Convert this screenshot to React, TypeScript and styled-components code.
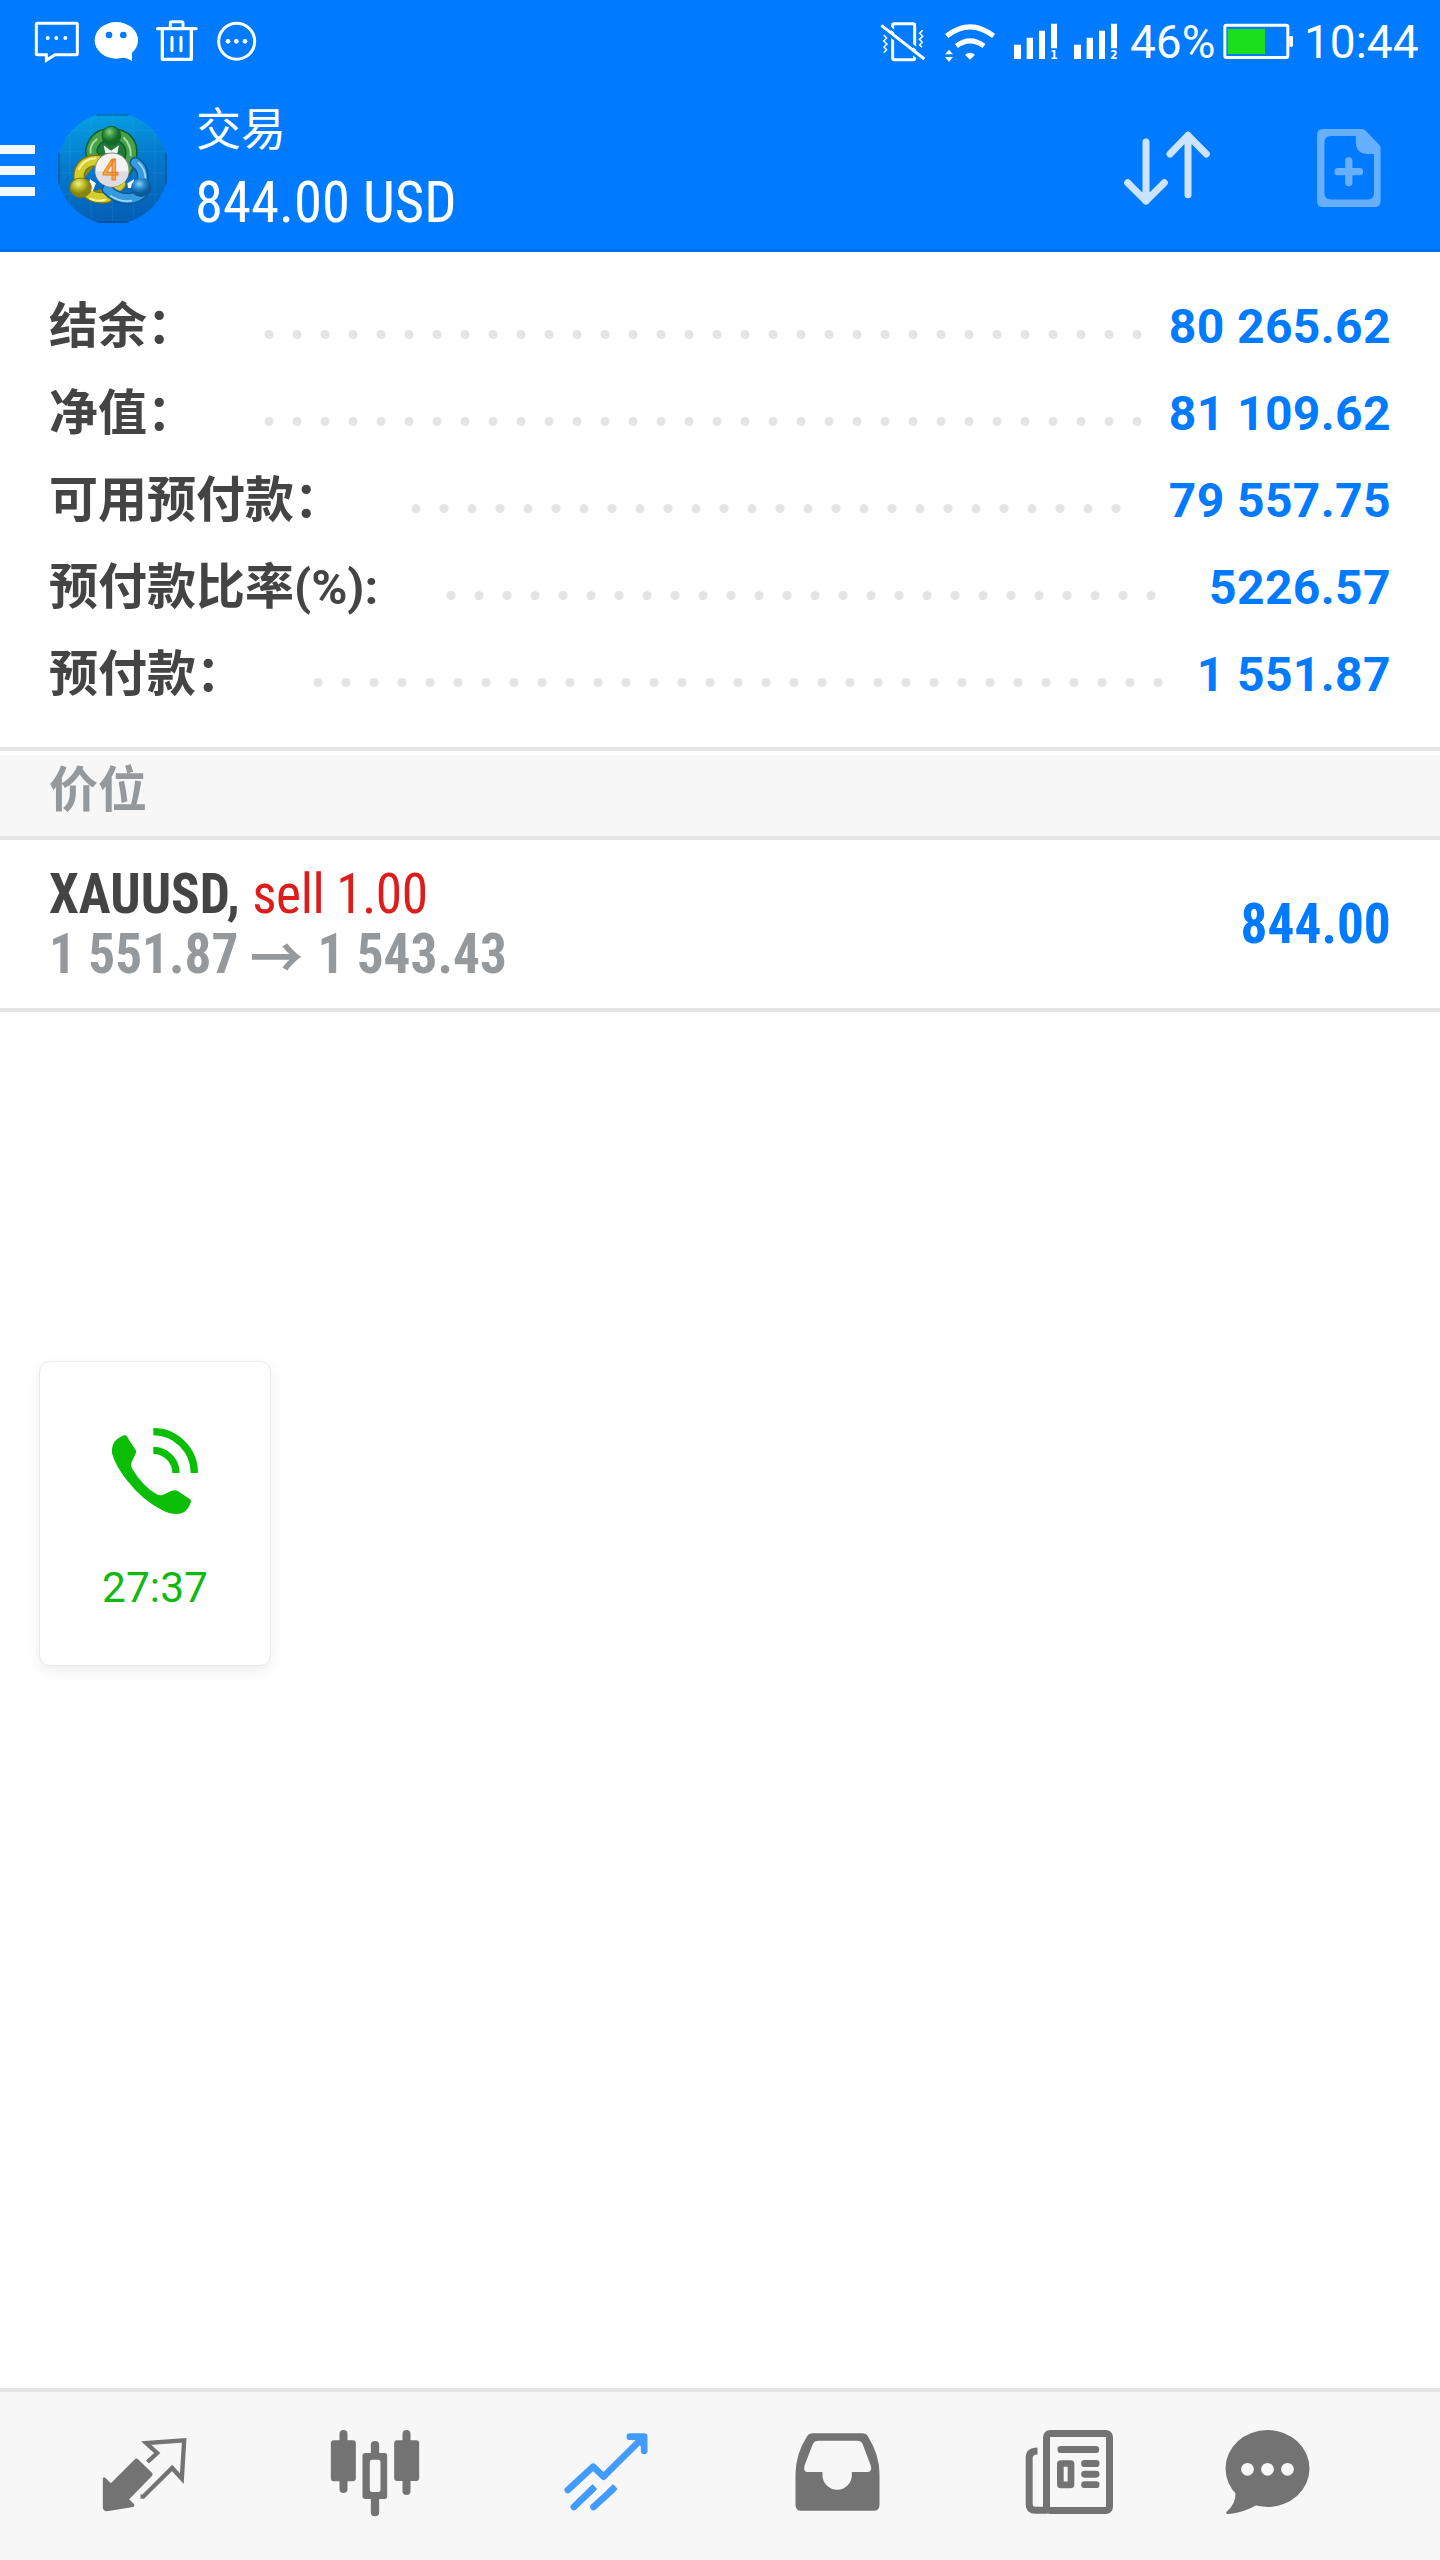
import React from "react";
import styled, { createGlobalStyle } from "styled-components";

const blue = "#007aff";
const line = "#e4e4e4";
const panel = "#f7f7f7";
const iconGray = "#737373";
const sans = `Roboto, "Noto Sans CJK SC", sans-serif`;
const condensed = `"Roboto Condensed", Roboto, "Noto Sans CJK SC", sans-serif`;

const GlobalStyle = createGlobalStyle`
  * { box-sizing: border-box; }
  body { margin: 0; background: #fff; font-family: ${sans}; }
  svg { display: block; flex: none; }
`;

const Screen = styled.div`
  position: relative;
  display: flex;
  flex-direction: column;
  width: 1440px;
  height: 2560px;
  overflow: hidden;
  background: #fff;
`;

const StatusBar = styled.header`
  display: flex;
  justify-content: space-between;
  height: 84px;
  padding: 18px 0 18px 32px;
  background: ${blue};
  color: #fff;
`;

const StatusGroup = styled.div`
  display: flex;
`;

const StatusText = styled.span<{ $width: number; $indent: number }>`
  width: ${(p) => p.$width}px;
  padding-left: ${(p) => p.$indent}px;
  font-size: 46px;
  line-height: 48px;
  white-space: nowrap;
`;

const AppBar = styled.div`
  display: flex;
  align-items: center;
  height: 168px;
  padding-right: 59px;
  background: ${blue};
  box-shadow: inset 0 -3px 0 #006fe8;
`;

const Logo = styled.svg`
  margin-left: 23px;
`;

const Heading = styled.div`
  display: flex;
  flex-direction: column;
  gap: 12px;
  align-self: flex-start;
  margin: 16px 0 0 28px;
  color: #fff;
`;

const Title = styled.h1`
  margin: 0;
  padding-left: 1px;
  font: 400 45px/54px "Noto Sans CJK SC", sans-serif;
`;

const Balance = styled.div`
  font: 400 58px/72px ${condensed};
  transform: scaleX(0.978);
  transform-origin: left;
`;

const Actions = styled.div`
  display: flex;
  align-items: center;
  gap: 105px;
  margin-left: auto;
`;

const Summary = styled.section`
  padding: 31px 49px 29px;
`;

const SummaryRow = styled.div`
  display: flex;
  height: 87px;
  line-height: 87px;
  font-weight: 700;
`;

const Label = styled.span`
  font-size: 49px;
  color: #444;
  white-space: nowrap;
`;

const Leader = styled.span<{ $dots: number }>`
  width: ${(p) => p.$dots * 28}px;
  margin-left: 59px;
  background: radial-gradient(circle at 14px 51.5px, ${line} 4px, transparent 5px) 0 0 / 28px 87px repeat-x;
`;

const Amount = styled.span`
  margin-left: auto;
  font-size: 48px;
  letter-spacing: 0.4px;
  color: ${blue};
  white-space: nowrap;
`;

const SectionHead = styled.h2`
  height: 93px;
  margin: 0;
  padding: 4px 49px 0;
  border: solid ${line};
  border-width: 4px 0;
  background: linear-gradient(#fff 4px, ${panel} 4px);
  font: 700 49px/72px ${sans};
  color: #95999c;
`;

const Position = styled.div`
  display: flex;
  justify-content: space-between;
  align-items: center;
  height: 172px;
  padding: 0 49px;
  border-bottom: 4px solid ${line};
  font: 700 56px/60px ${condensed};
`;

const Order = styled.div`
  display: flex;
  flex-direction: column;
  transform: scaleX(0.952);
  transform-origin: left;
`;

const Instrument = styled.div`
  color: #444;
`;

const Side = styled.span`
  font-weight: 400;
  letter-spacing: -0.4px;
  color: #dd1c1c;
`;

const Prices = styled.div`
  display: flex;
  color: #95999c;
`;

const Arrow = styled.span`
  margin: 0 15px 0 12px;
  font-family: "Noto Sans CJK SC", sans-serif;
`;

const Profit = styled.div`
  color: ${blue};
  transform: scaleX(0.952);
  transform-origin: right;
`;

const CallCard = styled.aside`
  position: absolute;
  left: 39px;
  top: 1361px;
  display: flex;
  flex-direction: column;
  align-items: center;
  gap: 49px;
  width: 232px;
  height: 305px;
  padding-top: 66px;
  border: 1px solid #e9e9e9;
  border-radius: 11px;
  background: #fff;
  box-shadow: 0 5px 14px rgba(0, 0, 0, 0.07);
`;

const CallTime = styled.span`
  font-size: 42.5px;
  line-height: 50px;
  color: #12b812;
`;

const TabBar = styled.nav`
  display: grid;
  grid-template-columns: repeat(5, 231px) 167px;
  place-items: center;
  height: 172px;
  margin-top: auto;
  padding-left: 29px;
  border-top: 4px solid ${line};
  background: ${panel};
`;

const Tab = styled.button`
  padding: 0;
  border: 0;
  background: none;
  color: ${iconGray};
`;

const rows = [
  { label: "结余：", amount: "80 265.62", dots: 32 },
  { label: "净值：", amount: "81 109.62", dots: 32 },
  { label: "可用预付款：", amount: "79 557.75", dots: 26 },
  { label: "预付款比率(%):", amount: "5226.57", dots: 26 },
  { label: "预付款：", amount: "1 551.87", dots: 31 },
];

function LeftStatusIcons() {
  return (
    <StatusGroup>
      <svg width="56" height="48" viewBox="96 54 168 144" fill="none" stroke="#fff" strokeWidth="9">
        <path d="M112 70H229Q232 70 232 73V161Q232 164 229 164H165L139 181V164H112Q109 164 109 161V73Q109 70 112 70Z" />
        <g fill="#fff" stroke="none"><circle cx="143" cy="114" r="6" /><circle cx="169" cy="114" r="6" /><circle cx="196" cy="114" r="6" /></g>
      </svg>
      <svg width="60" height="48" viewBox="264 54 180 144" fill="#fff">
        <ellipse cx="349" cy="121" rx="65" ry="55" />
        <path d="M368 172Q384 175 396 183V150Z" />
        <circle cx="327" cy="105" r="10" fill={blue} /><circle cx="370" cy="105" r="10" fill={blue} />
      </svg>
      <svg width="60" height="48" viewBox="444 54 180 144" fill="none" stroke="#fff" strokeWidth="10">
        <path d="M473 86H588" strokeLinecap="round" />
        <path d="M511 84V70Q511 65 516 65H544Q549 65 549 70V84" strokeWidth="9" />
        <path d="M487 88V178H574V88" strokeLinejoin="round" />
        <path d="M516 112V152M543 112V152" strokeLinecap="round" strokeWidth="9" />
      </svg>
      <svg width="58" height="48" viewBox="624 54 174 144" fill="#fff">
        <circle cx="710" cy="124" r="54" fill="none" stroke="#fff" strokeWidth="9" />
        <circle cx="684" cy="124" r="7" /><circle cx="709" cy="124" r="7" /><circle cx="735" cy="124" r="7" />
      </svg>
    </StatusGroup>
  );
}

function Signal({ slot }: { slot: number }) {
  return (
    <svg width="60" height="48" viewBox="408 24 180 144" fill="#fff">
      <path d="M432 104H453V147H432ZM470 83H489V147H470ZM507 62H525V147H507ZM543 41H561V115H543Z" />
      <text x="552" y="147" fontFamily="DejaVu Sans" fontWeight="700" fontSize="37" textAnchor="middle" textLength="22" lengthAdjust="spacingAndGlyphs">{slot}</text>
    </svg>
  );
}

function RightStatusIcons() {
  return (
    <StatusGroup>
      <svg width="56" height="48" viewBox="24 24 168 144" fill="none" stroke="#fff">
        <rect x="68" y="41" width="66" height="108" rx="4" strokeWidth="9" />
        <path d="M38 59L158 153" stroke={blue} strokeWidth="9" />
        <path d="M46 42L166 136" stroke={blue} strokeWidth="7" />
        <path d="M34 46L163 147" strokeWidth="9" />
        <path d="M41 75L50 84L41 93L51 102L42 111L50 119L41 128M158 61L149 70L158 79L148 88L157 97L149 105L156 112" strokeWidth="4.5" />
      </svg>
      <svg width="72" height="48" viewBox="192 24 216 144" fill="#fff">
        <g fill="none" stroke="#fff" strokeWidth="15"><path d="M230 78Q300 23 371 78" /><path d="M259 108Q300 77 342 108" /></g>
        <path d="M285 134Q300 122 315 134L300 149ZM225 133L237 119L249 133ZM225 141H249L237 155Z" />
      </svg>
      <Signal slot={1} />
      <Signal slot={2} />
      <StatusText $width={92} $indent={4}>46%</StatusText>
      <svg width="80" height="48" viewBox="1044 24 240 144">
        <rect x="1064.500" y="45.500" width="189" height="97" rx="5" fill="none" stroke="#fff" strokeWidth="9" />
        <path d="M1258 78H1266Q1269 78 1269 81V107Q1269 110 1266 110H1258Z" fill="#fff" />
        <rect x="1073" y="57" width="112" height="75" fill="#1cdf1c" />
      </svg>
      <StatusText $width={142} $indent={6}>10:44</StatusText>
    </StatusGroup>
  );
}

function AppLogo() {
  return (
    <Logo width="109" height="109" viewBox="54 54 327 327">
      <defs>
        <linearGradient id="sky" x1="0" y1="0" x2="0.150" y2="1">
          <stop offset="0" stopColor="#06a5e6" /><stop offset="0.500" stopColor="#0579cc" /><stop offset="1" stopColor="#0460b6" />
        </linearGradient>
        <radialGradient id="green" cx="0.400" cy="0.300"><stop offset="0" stopColor="#8fd08a" /><stop offset="0.500" stopColor="#3c9a45" /><stop offset="1" stopColor="#14692a" /></radialGradient>
        <radialGradient id="yellow" cx="0.400" cy="0.300"><stop offset="0" stopColor="#f1ee8d" /><stop offset="0.500" stopColor="#c3c02c" /><stop offset="1" stopColor="#858510" /></radialGradient>
        <radialGradient id="azure" cx="0.400" cy="0.300"><stop offset="0" stopColor="#8fd0f4" /><stop offset="0.500" stopColor="#2a8ed0" /><stop offset="1" stopColor="#0b5a9c" /></radialGradient>
      </defs>
      <circle cx="217.500" cy="217.500" r="167" fill="url(#sky)" />
      <path d="M90 110V325M153 66V370M217 60V375M281 66V370M345 110V325M80 103H355M62 167H373M60 231H375M70 295H365" stroke="#3db4ee" strokeOpacity="0.250" strokeWidth="2" fill="none" />
      <path d="M170 57H265M57 170V265M378 170V265M170 378H265" stroke="#06458f" strokeOpacity="0.450" strokeWidth="6" />
      <g fill="none" strokeLinecap="round">
        <path d="M163 184Q148 172 159 147Q174 114 213 115Q260 116 272 152Q280 186 258 222" fill="#1f7a38" stroke="#0b5f2a" strokeWidth="38" />
        <path d="M163 184Q148 172 159 147Q174 114 213 115Q260 116 272 152Q280 186 258 222" stroke="#46a148" strokeWidth="29" />
        <path d="M152 170Q148 148 170 130M252 126Q274 148 272 178" stroke="#a5dda0" strokeWidth="6" />
        <path d="M176 194Q136 191 121 221Q113 239 121 260M142 290Q166 311 203 303L242 264" fill="#8f8b12" stroke="#7c7708" strokeWidth="35" />
        <path d="M176 194Q136 191 121 221Q113 239 121 260M142 290Q166 311 203 303L242 264" stroke="#d2cd2c" strokeWidth="27" />
        <path d="M166 187Q130 190 117 219M150 308Q172 319 196 311" stroke="#f5f3a0" strokeWidth="6" />
        <path d="M286 200Q306 212 308 238L308 262M202 280Q226 306 263 308Q290 307 306 292" fill="#1972b8" stroke="#0b559c" strokeWidth="35" />
        <path d="M286 200Q306 212 308 238L308 262M202 280Q226 306 263 308Q290 307 306 292" stroke="#359bdc" strokeWidth="26" />
        <path d="M295 200Q314 216 316 244M212 300Q244 320 274 314" stroke="#9ed9f8" strokeWidth="5" />
      </g>
      <path d="M191 148L213 164L237 148L232 172H196ZM150 250L168 262L158 286L142 282ZM282 250L262 262L264 276L284 276Z" fill="#f2f7f2" />
      <circle cx="214" cy="119" r="28" fill="url(#green)" stroke="#11642a" strokeWidth="3" />
      <ellipse cx="122" cy="275" rx="32" ry="29" fill="url(#yellow)" stroke="#7d7b10" strokeWidth="3" />
      <ellipse cx="304" cy="275" rx="31" ry="28" fill="url(#azure)" />
      <circle cx="216" cy="222" r="51" fill="#f3f3f6" stroke="#8b8b74" strokeWidth="3" />
      <path d="M166 226H266Q262 270 216 272Q170 270 166 226Z" fill="#dcdce2" />
      <text x="212" y="253" fontFamily="Roboto" fontSize="86" fontWeight="500" fill="#f9b04c" stroke="#ea7d16" strokeWidth="3" textAnchor="middle">4</text>
    </Logo>
  );
}

function Tabs() {
  return (
    <TabBar>
      <Tab>
        <svg width="100" height="100" viewBox="103.500 168 300 300" fill="currentColor">
          <path d="M224 267Q228 264 232 267L275 309Q278 313 275 317L206 388L221 403Q224 409 218 411L140 424Q127 424 127 412V325Q130 319 135 324L151 340Z" />
          <path d="M261 276L290 249L257 219L371 211L364 326L335 294L248 380H240" fill="none" stroke="currentColor" strokeWidth="13" />
        </svg>
      </Tab>
      <Tab>
        <svg width="100" height="100" viewBox="796.500 168 300 300" fill="currentColor">
          <rect x="837" y="180" width="24" height="189" rx="12" /><rect x="811" y="211" width="75" height="123" rx="9" />
          <rect x="931" y="213" width="25" height="226" rx="12" /><rect x="906" y="249" width="74" height="138" rx="8" />
          <rect x="928" y="269" width="32" height="97" rx="7" fill={panel} />
          <rect x="1026" y="180" width="24" height="195" rx="12" /><rect x="1001" y="211" width="75" height="122" rx="9" />
        </svg>
      </Tab>
      <Tab>
        <svg width="100" height="100" viewBox="109.500 168 300 300" fill="none" stroke="#429bff" strokeWidth="20" strokeLinecap="round" strokeLinejoin="round">
          <path d="M142 360L218 290L249 320L369 201M328 200H371V243M160 411L216 357M219 411L278 357" />
          <path d="M205 367L223 350M266 367L284 350" strokeLinecap="butt" />
          <path d="M350 203L368 203L368 222Z" />
        </svg>
      </Tab>
      <Tab>
        <svg width="100" height="100" viewBox="802.500 168 300 300" fill="currentColor">
          <path fillRule="evenodd" d="M878 190H1025Q1036 190 1043 200Q1077 255 1077 312V404Q1077 422 1060 422H842Q825 422 825 404V312Q826 250 859 200Q866 190 878 190ZM895 212Q881 212 877 222L852 287Q848 306 862 306H906V316A44 43 0 0 0 994 316V306H1040Q1055 306 1051 287L1026 221Q1022 212 1010 212Z" />
        </svg>
      </Tab>
      <Tab>
        <svg width="100" height="100" viewBox="115.500 168 300 300" fill="currentColor">
          <path d="M171 243Q146 243 146 264V403Q146 421 165 421H200" fill="none" stroke="currentColor" strokeWidth="21" />
          <rect x="198" y="190.500" width="189" height="231" rx="11" fill="none" stroke="currentColor" strokeWidth="21" />
          <rect x="231" y="228" width="125" height="21" rx="10" />
          <rect x="239.500" y="280.500" width="32" height="64" rx="1" fill="none" stroke="currentColor" strokeWidth="20" strokeLinejoin="round" />
          <rect x="302" y="270" width="55" height="21" rx="10" /><rect x="302" y="302" width="55" height="21" rx="10" /><rect x="302" y="334" width="55" height="20" rx="10" />
        </svg>
      </Tab>
      <Tab>
        <svg width="100" height="100" viewBox="712.500 168 300 300" fill="currentColor">
          <ellipse cx="861" cy="295.500" rx="126" ry="115.500" />
          <path d="M765 365Q767 401 738 425Q734 432 744 432Q788 430 832 403Z" />
          <g fill={panel}><circle cx="801" cy="298" r="19" /><circle cx="861" cy="298" r="19" /><circle cx="921" cy="298" r="19" /></g>
        </svg>
      </Tab>
    </TabBar>
  );
}

export default function App() {
  return (
    <Screen>
      <GlobalStyle />
      <StatusBar>
        <LeftStatusIcons />
        <RightStatusIcons />
      </StatusBar>
      <AppBar>
        <svg width="35" height="60" viewBox="0 0 35 60" fill="#f0f7fd"><path d="M0 7H35V16H0ZM0 28H35V37H0ZM0 49H35V58H0Z" /></svg>
        <AppLogo />
        <Heading>
          <Title>交易</Title>
          <Balance>844.00 USD</Balance>
        </Heading>
        <Actions>
          <svg width="90" height="79" viewBox="756 354 270 237" fill="none" stroke="#cce4ff" strokeWidth="21" strokeLinecap="round" strokeLinejoin="round">
            <path d="M828 393V570M773 515L828 570L883 515M954 551V373M900 429L954 373L1009 429" />
          </svg>
          <svg width="64" height="78" viewBox="0 0 64 78" fill="#66b0ff">
            <path fillRule="evenodd" d="M6 0H45Q47 0 49 2L62 15.500Q63.600 17 63.600 19V72Q63.600 78 57.600 78H6Q0 78 0 72V6Q0 0 6 0ZM14 7Q7.400 7 7.400 14V64Q7.400 70.500 14 70.500H50.500Q57 70.500 57 64V25H51Q39.500 25 38.800 14V7Z" />
            <path d="M31.800 32V53.500M21 42.700H42.500" stroke="#66b0ff" strokeWidth="7.300" strokeLinecap="round" />
          </svg>
        </Actions>
      </AppBar>
      <Summary>
        {rows.map((r) => (
          <SummaryRow key={r.label}>
            <Label>{r.label}</Label>
            <Leader $dots={r.dots} />
            <Amount>{r.amount}</Amount>
          </SummaryRow>
        ))}
      </Summary>
      <SectionHead>价位</SectionHead>
      <Position>
        <Order>
          <Instrument>XAUUSD, <Side>sell 1.00</Side></Instrument>
          <Prices>1 551.87<Arrow>→</Arrow>1 543.43</Prices>
        </Order>
        <Profit>844.00</Profit>
      </Position>
      <CallCard>
        <svg width="86" height="86" viewBox="276 264 258 258" fill="#0abd05">
          <path d="M318 286Q322 290 325 296L347 330Q350 336 346 343L335 366Q331 377 337 387Q369 440 410 463Q420 468 430 464L455 452Q465 448 474 454L508 476Q515 480 512 488Q502 514 484 520Q460 526 430 512Q370 484 320 420Q285 375 276 340Q273 303 303 290Q312 285 318 286Z" />
          <path d="M400 275A123 124 0 0 1 523 399M400 331A68 68 0 0 1 468 399" fill="none" stroke="#0abd05" strokeWidth="22" />
        </svg>
        <CallTime>27:37</CallTime>
      </CallCard>
      <Tabs />
    </Screen>
  );
}
